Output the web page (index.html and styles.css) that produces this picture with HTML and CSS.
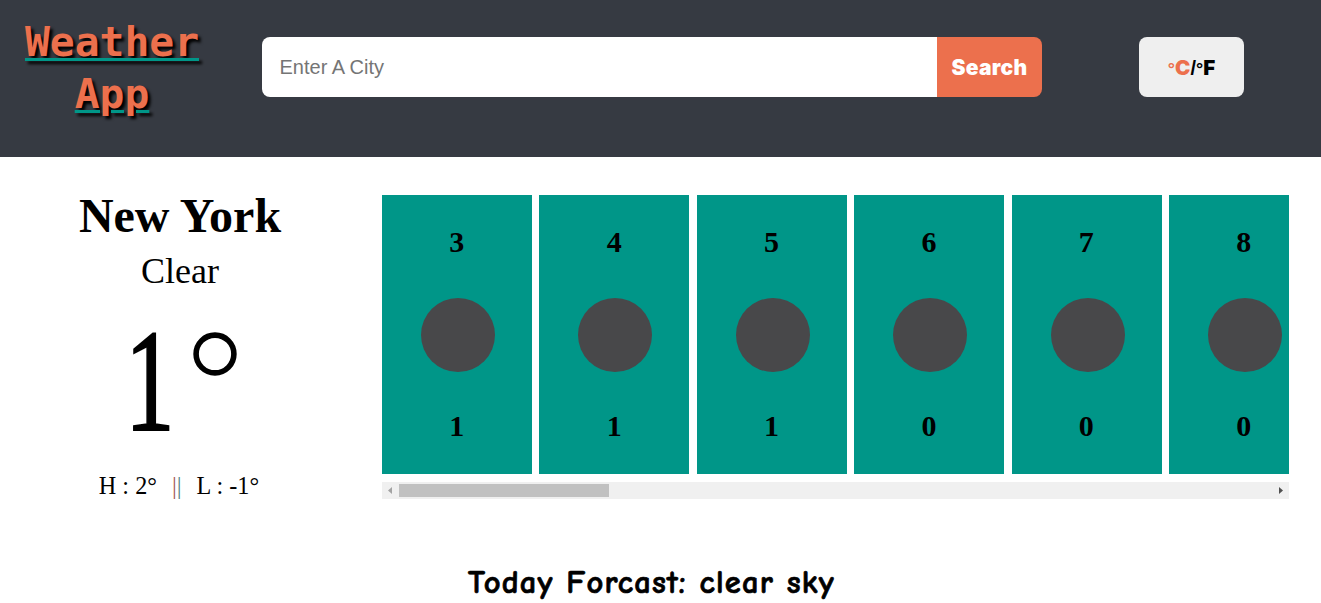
FILE: index.html
```html
<!DOCTYPE html>
<html lang="en">
<head>
<meta charset="utf-8">
<title>Weather App</title>
<link rel="stylesheet" href="styles.css">
</head>
<body>
<header class="header">
  <h1 class="title">Weather<br>App</h1>
  <form class="search">
    <input class="search-input" type="text" placeholder="Enter A City">
    <button class="search-button" type="button">Search</button>
  </form>
  <button class="units" type="button"><span class="unit active"><span class="deg">°</span>C</span><span class="slash">/</span><span class="unit"><span class="deg">°</span>F</span></button>
</header>
<main class="main">
  <section class="current">
    <h2 class="city">New York</h2>
    <p class="condition">Clear</p>
    <p class="temp"><span class="temp-value">1</span><svg class="temp-deg" viewBox="0 0 44 44"><circle cx="22" cy="22" r="18.9" fill="none" stroke="#000" stroke-width="5.6"/></svg></p>
    <p class="range"><span>H : 2°</span><span class="bars"><span class="bar-left">|</span><span class="bar-right">|</span></span><span>L : -1°</span></p>
  </section>
  <section class="hourly">
    <div class="cards">
      <article class="card"><b>3</b><i class="icon"></i><b>1</b></article>
      <article class="card"><b>4</b><i class="icon"></i><b>1</b></article>
      <article class="card"><b>5</b><i class="icon"></i><b>1</b></article>
      <article class="card"><b>6</b><i class="icon"></i><b>0</b></article>
      <article class="card"><b>7</b><i class="icon"></i><b>0</b></article>
      <article class="card"><b>8</b><i class="icon"></i><b>0</b></article>
    </div>
    <div class="scrollbar">
      <svg class="arrow" viewBox="0 0 17 17"><path d="M10 5v7L6 8.500z" fill="#a3a3a3"/></svg>
      <div class="thumb"></div>
      <svg class="arrow" viewBox="0 0 17 17"><path d="M7 5v7l4-3.500z" fill="#505050"/></svg>
    </div>
  </section>
</main>
<h2 class="forecast">Today Forcast: clear sky</h2>
<footer class="footer"><div class="footer-mark"></div></footer>
</body>
</html>
```
FILE: styles.css
```css
* { box-sizing: border-box; }
body { margin: 0; height: 603px; overflow: hidden; background: #fff; color: #000; font-family: "Liberation Serif", "Times New Roman", serif; display: flex; flex-direction: column; }
h1, h2, p { margin: 0; }
button { border: 0; padding: 0; }
.header { height: 157px; flex: none; background: #363a42; display: flex; align-items: flex-start; }
.title { width: 224px; margin-top: 16px; font: bold 41.300px/52px "DejaVu Sans Mono", monospace; color: #ec704d; text-align: center; text-shadow: 3px 3px 3px #000; text-decoration: underline #009688 3px; text-underline-offset: 2px; }
.search { display: flex; width: 780px; height: 60px; margin: 37px 0 0 38px; border-radius: 8px; overflow: hidden; }
.search-input { width: 675px; border: 0; padding: 0 17.500px; background: #fff; font: 20px "Liberation Sans", Arial, sans-serif; }
.search-input::placeholder { color: #757575; }
.search-button { width: 105px; padding-top: 1px; background: #ec704d; color: #fff; font: 900 21px Inter, sans-serif; letter-spacing: 0.300px; }
.units { width: 105px; height: 60px; margin: 37px 0 0 97px; padding-top: 1px; border-radius: 8px; background: #efefef; color: #000; font: 900 20.500px Inter, sans-serif; }
.active { color: #ec704d; }
.deg { font: 700 18px "Liberation Sans", Arial, sans-serif; }
.slash { font: 700 20px "Liberation Sans", Arial, sans-serif; }
.main { display: flex; height: 384px; flex: none; padding-top: 38px; }
.current { width: 360px; flex: none; text-align: center; }
.city { font-size: 48px; line-height: 42px; }
.condition { font-size: 36px; line-height: 42px; margin-top: 13px; }
.temp { display: flex; justify-content: center; align-items: flex-start; height: 150px; margin-top: 14px; padding-right: 4px; font-size: 146px; line-height: 150px; }
.temp-value { width: 73px; transform: scaleX(0.680); transform-origin: 16px 0; -webkit-text-stroke: 2px #000; }
.temp-deg { width: 44px; height: 44px; margin: 26px 0 0 0; }
.range { display: flex; justify-content: center; gap: 15px; font-size: 24.200px; line-height: 30px; margin-top: 15px; padding-right: 2px; }
.bar-left { color: #a45b58; }
.bar-right { color: #55868a; }
.hourly { width: 907px; margin-left: 22px; }
.cards { display: flex; gap: 7.400px; height: 279px; overflow: hidden; }
.card { width: 150px; flex: none; background: #009688; display: flex; flex-direction: column; align-items: center; padding-top: 30px; font-size: 30px; line-height: 34px; }
.icon { width: 74px; height: 74px; margin: 39px 0 37px 2px; border-radius: 50%; background: #48484a; }
.card b { margin-right: 0.500px; }
.scrollbar { display: flex; align-items: center; justify-content: flex-start; height: 17px; margin-top: 8px; background: #f0f0f0; }
.arrow { width: 17px; height: 17px; flex: none; }
.thumb { width: 210px; height: 13px; background: #c1c1c1; margin-right: auto; }
.forecast { margin: 20px 0 0 468px; font: bold 32.500px/43px "Comic Sans MS", "Comic Neue", Lato, sans-serif; letter-spacing: 1.200px; white-space: nowrap; -webkit-text-stroke: 0.700px #000; }
.footer { margin-top: auto; height: 1px; flex: none; background: #202124; padding-left: 25px; }
.footer-mark { width: 344px; height: 1px; background: #c1c1c1; }
```
